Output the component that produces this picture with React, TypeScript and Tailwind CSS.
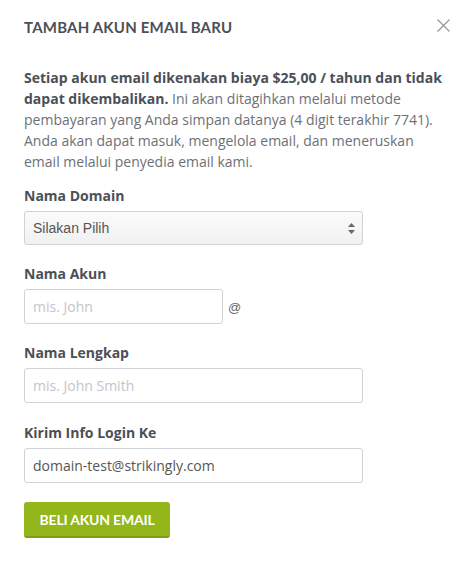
const label = "block text-[14px] leading-[20px] font-bold text-[#4b5058] mb-[5px]"
const field =
  "block h-[35px] rounded-[3px] border border-[#cfd2d6] bg-white px-[8px] text-[14px] text-[#555] placeholder:text-[#c2c5ca] outline-none"

export default function App() {
  return (
    <div className="w-[470px] h-[567px] bg-white font-['Open_Sans',sans-serif]">
      <div className="flex items-start justify-between pl-[24px] pr-[20px] pt-[17px]">
        <h2 className="font-['Lato',sans-serif] font-bold text-[15px] leading-[20px] text-[#4b5058] tracking-[0.2px]">
          TAMBAH AKUN EMAIL BARU
        </h2>
        <button className="mt-[2px]" aria-label="Tutup">
          <svg width="13" height="13" viewBox="0 0 13 13">
            <path d="M0.5 0.5 L12.5 12.5 M12.5 0.5 L0.5 12.5" stroke="#8f949a" strokeWidth="1.1" />
          </svg>
        </button>
      </div>

      <div className="px-[24px]">
        <p className="mt-[30px] text-[14px] leading-[21px] text-[#6d7077]">
          <strong className="text-[#4b5058]">
            Setiap akun email dikenakan biaya $25,00 / tahun dan tidak dapat dikembalikan.
          </strong>{" "}
          Ini akan ditagihkan melalui metode pembayaran yang Anda simpan datanya (4 digit
          terakhir 7741). Anda akan dapat masuk, mengelola email, dan meneruskan email melalui
          penyedia email kami.
        </p>

        <div className="mt-[14px]">
          <label className={label}>Nama Domain</label>
          <div className="relative w-[339px]">
            <select className="block w-full h-[34px] appearance-none rounded-[3px] border border-[#cfd2d6] bg-gradient-to-b from-[#fbfbfb] to-[#f1f1f1] pl-[8px] font-['Liberation_Sans',Arial,sans-serif] text-[14px] text-[#555] outline-none">
              <option>Silakan Pilih</option>
            </select>
            <svg
              className="pointer-events-none absolute right-[8px] top-[12px]"
              width="7"
              height="11"
              viewBox="0 0 7 11"
            >
              <path d="M3.5 0 L7 4 H0 Z" fill="#666" />
              <path d="M0 7 H7 L3.5 11 Z" fill="#666" />
            </svg>
          </div>
        </div>

        <div className="mt-[19px]">
          <label className={label}>Nama Akun</label>
          <div className="flex items-center gap-[5px]">
            <input className={`${field} w-[199px]`} placeholder="mis. John" />
            <span className="font-['Liberation_Sans',Arial,sans-serif] text-[13px] text-[#666] mt-[2px]">
              @
            </span>
          </div>
        </div>

        <div className="mt-[19px]">
          <label className={label}>Nama Lengkap</label>
          <input className={`${field} w-[339px]`} placeholder="mis. John Smith" />
        </div>

        <div className="mt-[20px]">
          <label className={label}>Kirim Info Login Ke</label>
          <input
            className={`${field} w-[339px]`}
            defaultValue="domain-test@strikingly.com"
          />
        </div>

        <button className="mt-[19px] h-[36px] w-[146px] rounded-[3px] bg-[#93b61a] border-b-2 border-[#7f9e12] font-['Lato',sans-serif] font-bold text-[14px] text-white tracking-[-0.2px]">
          BELI AKUN EMAIL
        </button>
      </div>
    </div>
  )
}
